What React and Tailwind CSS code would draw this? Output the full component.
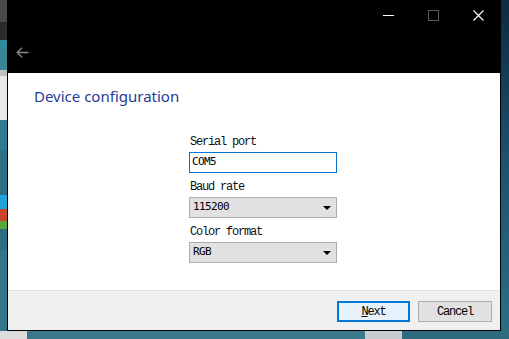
const valueFont = { fontFamily: '"DejaVu Sans Mono", "Liberation Mono", monospace' };

function CaptionButtons() {
  return (
    <div className="flex h-[30px] items-center justify-end gap-[34px] pr-[16px]">
      <div className="h-[1px] w-[11px] bg-white" />
      <div className="h-[11px] w-[11px] border border-[#5a5a5a]" />
      <svg width="11" height="11" viewBox="0 0 11 11">
        <path d="M0.5 0.5 L10.5 10.5 M10.5 0.5 L0.5 10.5" stroke="#ffffff" strokeWidth="1.1" />
      </svg>
    </div>
  );
}

function Label({ children }) {
  return (
    <div className="flex h-[24px] items-center pl-[1px] pt-[3px] font-['Courier_New','Liberation_Mono',monospace] text-[12px] tracking-[-1.2px] text-[#111]">
      {children}
    </div>
  );
}

function Combo({ value }) {
  return (
    <div className="flex h-[21px] items-center justify-between border border-[#adadad] bg-[#e1e1e1] pl-[3px] pr-[5px]">
      <span className="text-[11px] tracking-[-0.6px] text-black" style={valueFont}>
        {value}
      </span>
      <svg width="8" height="4" viewBox="0 0 8 4">
        <path d="M0 0 L8 0 L4 4 Z" fill="#000" />
      </svg>
    </div>
  );
}

function Window() {
  return (
    <div className="flex w-[494px] flex-col border-x border-b border-black">
      {/* title bar */}
      <div className="h-[73px] bg-black">
        <CaptionButtons />
        <div className="pl-[8px] pt-[17px]">
          <svg width="13" height="11" viewBox="0 0 13 11">
            <path d="M12.5 5.5 L1 5.5 M6 0.7 L1.2 5.5 L6 10.3" stroke="#8a8a8a" strokeWidth="1.3" fill="none" />
          </svg>
        </div>
      </div>

      {/* content */}
      <div className="h-[217px] bg-white">
        <div
          className="pl-[26px] pt-[13px] text-[15px] leading-[20px] text-[#1e3c96]"
          style={{ fontFamily: '"Noto Sans", "Open Sans", sans-serif' }}
        >
          Device configuration
        </div>
        <div className="ml-[181px] mt-[22px] w-[148px]">
          <Label>Serial port</Label>
          <div className="flex h-[21px] items-center border border-[#0078d7] bg-white pl-[2px]">
            <span className="text-[11px] tracking-[-0.6px] text-black" style={valueFont}>
              COM5
            </span>
          </div>
          <Label>Baud rate</Label>
          <Combo value="115200" />
          <Label>Color format</Label>
          <Combo value="RGB" />
        </div>
      </div>

      {/* footer */}
      <div className="flex flex-1 justify-end gap-[8px] border-t border-[#dfdfdf] bg-[#f0f0f0] pr-[8px] pt-[10px]">
        <button className="flex h-[21px] w-[73px] items-center justify-center border-2 border-[#0078d7] bg-[#e5f1fb] font-['Courier_New','Liberation_Mono',monospace] text-[12px] tracking-[-1.2px] text-black">
          <span className="underline">N</span>ext
        </button>
        <button className="flex h-[21px] w-[74px] items-center justify-center border border-[#adadad] bg-[#e1e1e1] font-['Courier_New','Liberation_Mono',monospace] text-[12px] tracking-[-1.2px] text-black">
          Cancel
        </button>
      </div>
    </div>
  );
}

export default function App() {
  return (
    <div className="flex h-[339px] w-[509px] flex-col overflow-hidden bg-[#347688]">
      <div className="flex h-[331px]">
        {/* desktop strip on the left */}
        <div className="flex w-[7px] flex-col">
          <div className="h-[22px] bg-[#4a4a4a]" />
          <div className="h-[18px] bg-[#2a2a2a]" />
          <div className="h-[8px] bg-[#2e8ea0]" />
          <div className="h-[22px] bg-[#3a8496]" />
          <div className="h-[6px] bg-[#c0c0c0]" />
          <div className="h-[44px] bg-[#e9e9e9]" />
          <div className="h-[30px] bg-[#2f7a8e]" />
          <div className="h-[45px] bg-[#2f6f86]" />
          <div className="h-[14px] bg-[#22a3d8]" />
          <div className="h-[12px] bg-[#c8432a]" />
          <div className="h-[8px] bg-[#5aa83a]" />
          <div className="h-[20px] bg-[#2b6d83]" />
          <div className="h-[77px] bg-[#32758a]" />
        </div>
        <Window />
        <div className="flex-1 bg-gradient-to-b from-[#0d2a40] via-[#1b5472] to-[#2c6d85]" />
      </div>
      <div className="flex flex-1">
        <div className="w-[27px] bg-[#dcdcdc]" />
        <div className="w-[338px] bg-[#3b7a8c]" />
        <div className="w-[37px] bg-[#c6ccce]" />
        <div className="flex-1 bg-[#2f6b80]" />
      </div>
    </div>
  );
}
